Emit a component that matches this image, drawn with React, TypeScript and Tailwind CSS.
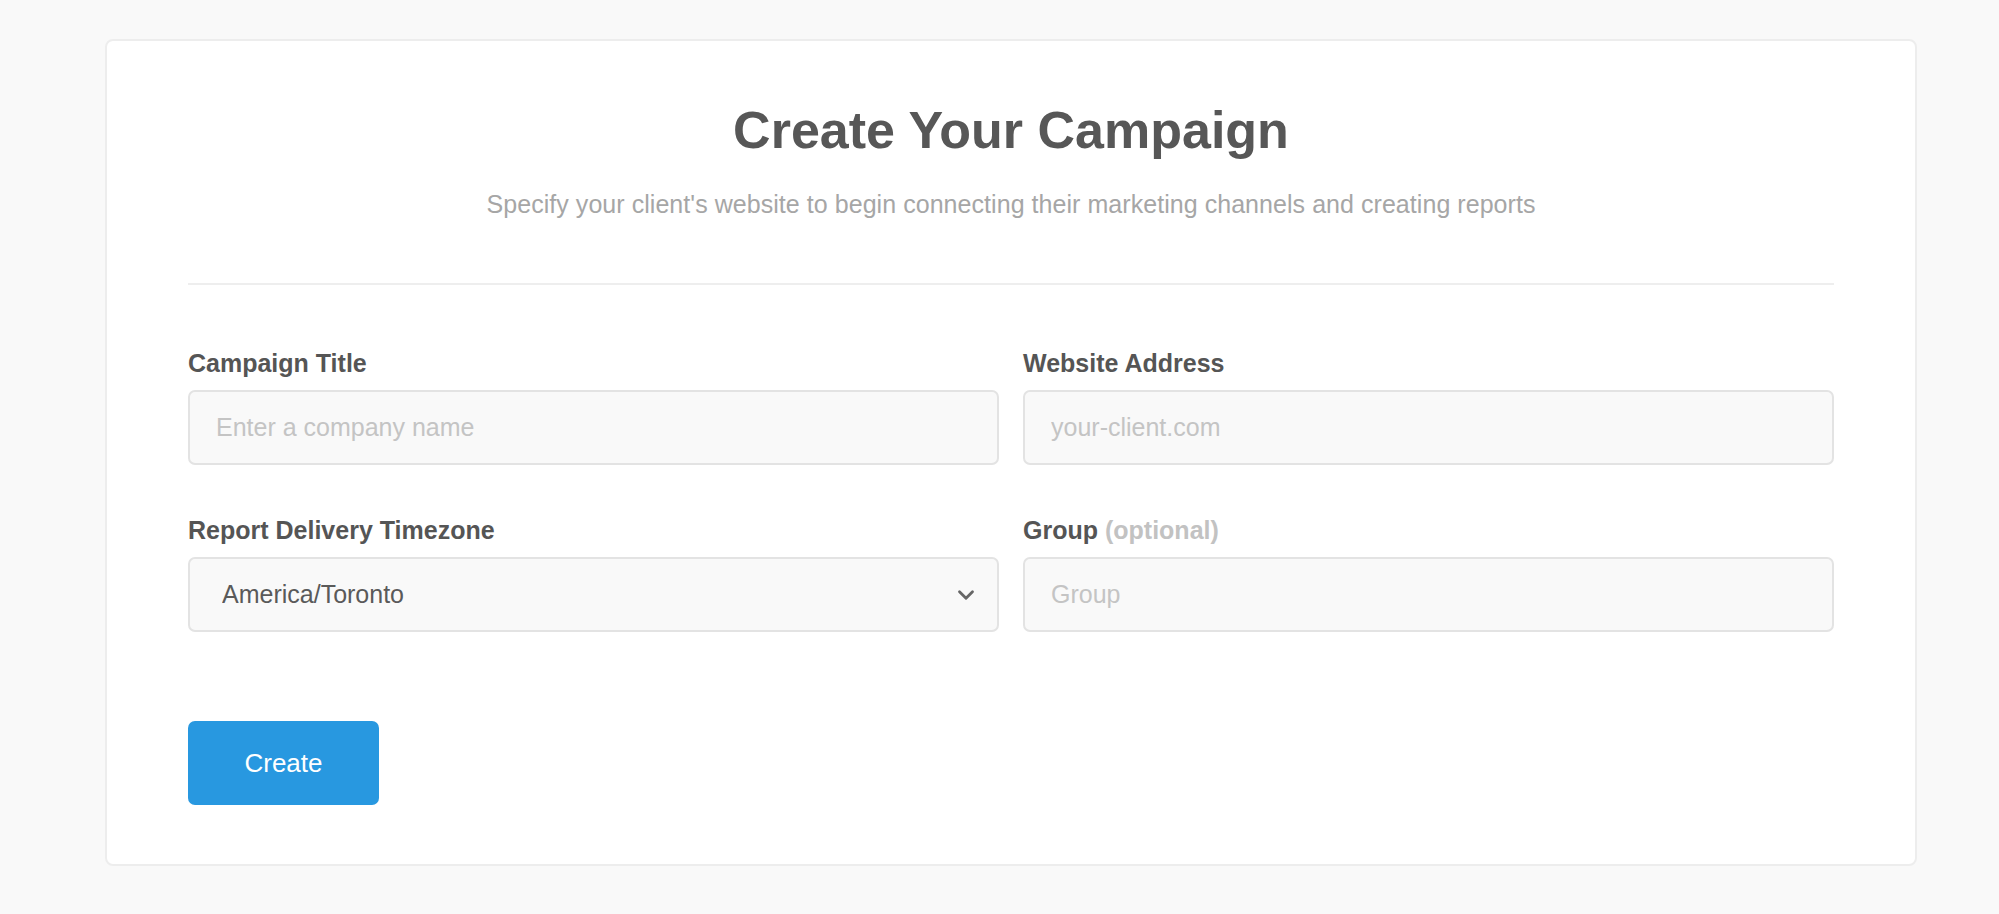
import { ChevronDown } from 'lucide-react';

const font = { fontFamily: '"Liberation Sans", Arial, sans-serif' };

function Field({
  label,
  hint,
  placeholder,
}: {
  label: string;
  hint?: string;
  placeholder: string;
}): JSX.Element {
  return (
    <div className="flex flex-col">
      <label className="text-[25px] leading-[25px] font-bold text-[#555555]">
        {label}
        {hint ? <span className="text-[#c2c2c2]"> {hint}</span> : null}
      </label>
      <input
        placeholder={placeholder}
        className="mt-[14px] h-[75px] w-full rounded-[7px] border-2 border-[#e3e3e3] bg-[#f9f9f9] pl-[26px] text-[25px] text-[#555555] outline-none placeholder:text-[#c4c4c4]"
      />
    </div>
  );
}

function TimezoneSelect(): JSX.Element {
  return (
    <div className="flex flex-col">
      <label className="text-[25px] leading-[25px] font-bold text-[#555555]">
        Report Delivery Timezone
      </label>
      <div className="relative mt-[14px]">
        <select
          defaultValue="America/Toronto"
          className="h-[75px] w-full appearance-none rounded-[7px] border-2 border-[#e3e3e3] bg-[#f9f9f9] pl-[32px] text-[25px] text-[#5a5a5a] outline-none"
        >
          <option>America/Toronto</option>
          <option>America/New_York</option>
          <option>America/Vancouver</option>
        </select>
        <ChevronDown
          className="pointer-events-none absolute right-[20px] top-1/2 -translate-y-1/2 text-[#666666]"
          size={26}
          strokeWidth={2.6}
        />
      </div>
    </div>
  );
}

export default function App(): JSX.Element {
  return (
    <div className="min-h-[914px] bg-[#f9f9f9] pt-[39px] pb-[47px]" style={font}>
      <div className="ml-[105px] w-[1812px] rounded-[8px] border-2 border-[#ededed] bg-white px-[81px] pt-[63px] pb-[59px]">
        <h1 className="text-center text-[52px] leading-[52px] font-bold text-[#575757]">
          Create Your Campaign
        </h1>
        <p className="mt-[36px] text-center text-[25px] leading-[25px] tracking-[0.05px] text-[#a6a6a6]">
          Specify your client's website to begin connecting their marketing channels and creating reports
        </p>
        <div className="mt-[66px] h-[2px] bg-[#eeeeee]" />

        <div className="mt-[66px] grid grid-cols-2 gap-x-[24px] gap-y-[53px]">
          <Field label="Campaign Title" placeholder="Enter a company name" />
          <Field label="Website Address" placeholder="your-client.com" />
          <TimezoneSelect />
          <Field label="Group" hint="(optional)" placeholder="Group" />
        </div>

        <button className="mt-[89px] h-[84px] w-[191px] rounded-[7px] bg-[#2898e0] text-[26px] text-white">
          Create
        </button>
      </div>
    </div>
  );
}
